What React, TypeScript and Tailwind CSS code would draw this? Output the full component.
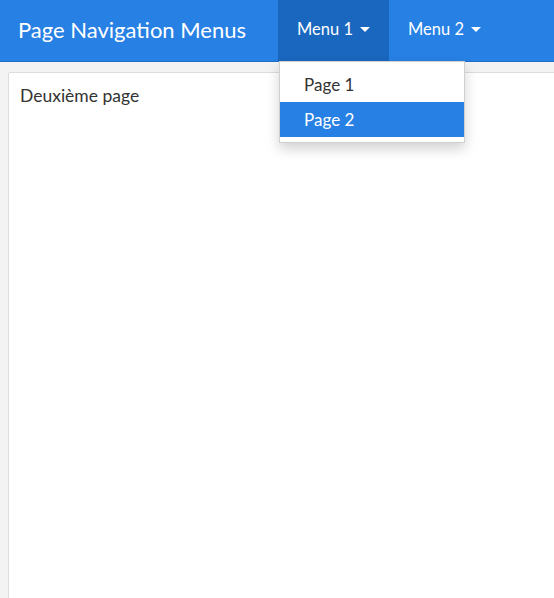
import { useState } from "react";

const menus = [
  { label: "Menu 1", items: ["Page 1", "Page 2"] },
  { label: "Menu 2", items: ["Page 3", "Page 4"] },
];

function Caret() {
  return (
    <span className="ml-[7px] inline-block w-0 h-0 border-x-[5px] border-x-transparent border-t-[5px] border-t-white align-middle" />
  );
}

export default function App() {
  const [open] = useState(0);
  const [active] = useState("Page 2");

  return (
    <div className="h-[598px] w-[554px] overflow-hidden bg-[#f3f3f3] font-['Lato','Liberation_Sans',sans-serif]">
      {/* Navbar */}
      <nav className="relative z-10 flex h-[62px] items-stretch bg-[#2780e3] border-b border-[#1f6fc5] text-white">
        <div className="flex items-center pl-[18px] pr-[32px] pb-[3px] text-[22px]">
          Page Navigation Menus
        </div>
        {menus.map((menu, i) => (
          <div key={menu.label} className="relative">
            <div
              className={`flex h-full items-center px-[19px] pb-[3px] text-[16.5px] ${
                open === i ? "bg-[#1967be]" : ""
              }`}
            >
              {menu.label}
              <Caret />
            </div>
            {open === i && (
              <div className="absolute left-[1px] top-[61px] w-[186px] border border-[#d0d0d0] bg-white py-[5px] shadow-[0_6px_12px_rgba(0,0,0,0.18)]">
                {menu.items.map((item) => (
                  <div
                    key={item}
                    className={`flex h-[35px] items-center pl-[24px] text-[17px] ${
                      item === active
                        ? "bg-[#2780e3] text-white"
                        : "text-[#333333]"
                    }`}
                  >
                    {item}
                  </div>
                ))}
              </div>
            )}
          </div>
        ))}
      </nav>

      {/* Page content */}
      <div className="ml-[8px] mt-[10px] h-[540px] w-[570px] rounded-[2px] border border-[#dddddd] bg-white px-[11px] pt-[10px]">
        <p className="text-[17.5px] text-[#333333]">Deuxième page</p>
      </div>
    </div>
  );
}
